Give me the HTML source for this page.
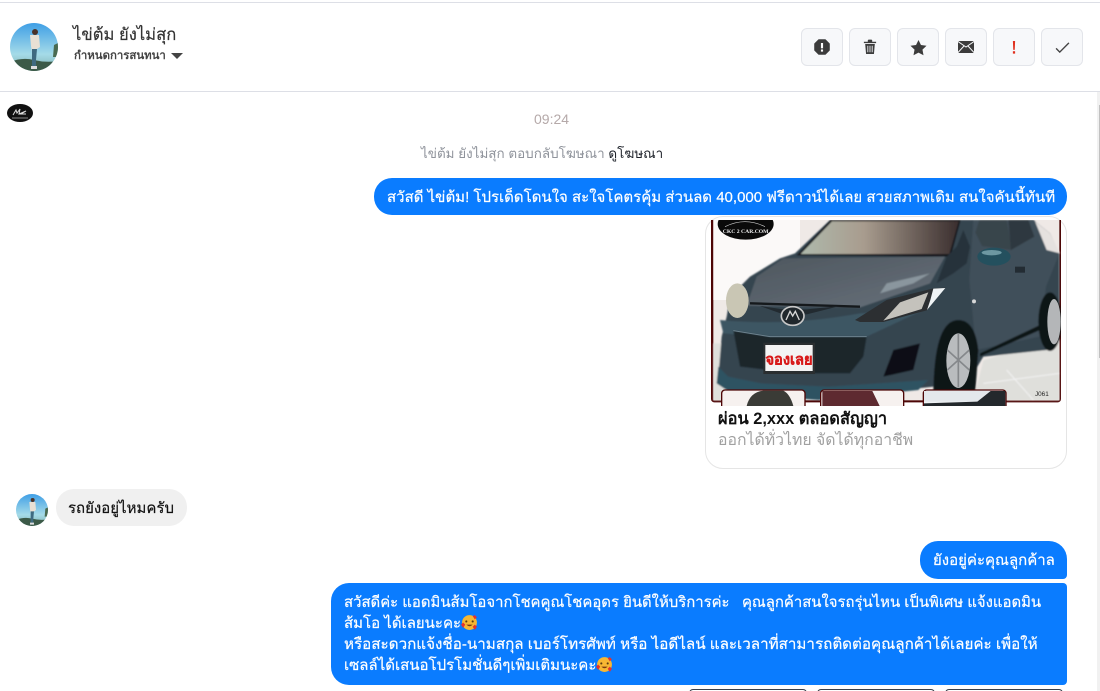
<!DOCTYPE html>
<html lang="th"><head><meta charset="utf-8"><title>Chat</title>
<style>
html,body{margin:0;padding:0;background:#fff;width:1100px;height:691px;overflow:hidden}
body{position:relative;font-family:"Liberation Sans","Noto Sans CJK SC",sans-serif;color:#111}
.a{position:absolute;white-space:nowrap}
.line{position:absolute;left:0;width:1100px;height:1px;background:#dddfe6}
.btn{position:absolute;top:28px;width:40px;height:36px;border:1px solid #e3e5ea;border-radius:6px;background:#f7f8fa;display:flex;align-items:center;justify-content:center}
.out{position:absolute;background:#0a7cff;color:#fff;font-size:15px;line-height:20px;white-space:nowrap;-webkit-text-stroke:.2px #fff}
.bb{position:absolute;top:689px;width:118px;height:8px;background:#fff;border:1px solid #3a3f4a;border-radius:6px;box-sizing:border-box}
</style></head><body>
<svg width="0" height="0" style="position:absolute"><defs>
<linearGradient id="sky" x1="0" y1="0" x2="0" y2="1"><stop offset="0" stop-color="#3f9fe6"/><stop offset=".65" stop-color="#a5dbe8"/><stop offset="1" stop-color="#7fb0b0"/></linearGradient>
<clipPath id="avc"><circle cx="24" cy="24" r="24"/></clipPath>
<symbol id="av" viewBox="0 0 48 48"><g clip-path="url(#avc)"><rect width="48" height="48" fill="url(#sky)"/><path d="M0 39q12-5 24-2t24 1v10H0z" fill="#3c5a48"/><path d="M44 22l4-2v14h-5z" fill="#4a6a50"/><circle cx="25" cy="9" r="3" fill="#4a3228"/><path d="M20 12h9l1 12-3 2-1 3h-4l-1-6z" fill="#e8e0d4"/><path d="M22 26h5l-1 11v7h-4z" fill="#3f6a80"/><path d="M21 43h6v3h-6z" fill="#ddd"/></g></symbol>
<symbol id="em" viewBox="0 0 16 16"><circle cx="8" cy="8" r="7" fill="#f7b733"/><circle cx="5" cy="7" r="1" fill="#5a3a10"/><circle cx="11" cy="7" r="1" fill="#5a3a10"/><path d="M5 10q3 3 6 0z" fill="#7a3a10"/><path d="M0 10l2-2 2 2-2 3zM11 12l2-2 2 2-2 3zM11 2l2-1 2 2-2 2z" fill="#e5322d"/></symbol>
<linearGradient id="hood" x1="0" y1="0" x2="1" y2="1"><stop offset="0" stop-color="#4d565e"/><stop offset="1" stop-color="#67707a"/></linearGradient>
<linearGradient id="ws" x1="0" y1="0" x2="1" y2="0"><stop offset="0" stop-color="#aeb9ac"/><stop offset=".4" stop-color="#a89c8e"/><stop offset="1" stop-color="#3a2e2e"/></linearGradient>
<filter id="bl"><feGaussianBlur stdDeviation="2.500"/></filter>
</defs></svg>

<div class="line" style="top:2px"></div>
<div class="line" style="top:91px"></div>

<svg class="a" style="left:10px;top:23px" width="48" height="48"><use href="#av"/></svg>
<div class="a" style="left:73px;top:25px;font-size:16.600px;line-height:20px;color:#333;-webkit-text-stroke:.2px #333">ไข่ต้ม ยังไม่สุก</div>
<div class="a" style="left:74px;top:49px;font-size:11.400px;line-height:15px;font-weight:700;color:#444">กำหนดการสนทนา</div>
<svg class="a" style="left:171px;top:52px" width="12" height="8"><path d="M0 1h12L6 7z" fill="#444"/></svg>

<div class="btn" style="left:801px"><svg width="16" height="16" viewBox="0 0 18 18"><path d="M5.500 1h7L17 5.500v7L12.500 17h-7L1 12.500v-7z" fill="#3c3c3c" stroke="#3c3c3c" stroke-width="1.500" stroke-linejoin="round"/><rect x="7.800" y="4.500" width="2.400" height="6" fill="#fff"/><rect x="7.800" y="11.800" width="2.400" height="2.400" fill="#fff"/></svg></div>
<div class="btn" style="left:849px"><svg width="14" height="16" viewBox="0 0 16 18"><path d="M1 3h14v1.500H1zM5.500 1.500q0-1 1-1h3q1 0 1 1V3h-5z" fill="#3c3c3c"/><path d="M2.500 5.500h11l-1 11.500h-9z" fill="#3c3c3c"/><path d="M5.500 7.500v7.500M8 7.500v7.500M10.500 7.500v7.500" stroke="#f7f8fa" stroke-width="1"/></svg></div>
<div class="btn" style="left:897px"><svg width="17" height="17" viewBox="0 0 18 17"><path d="M9 .5l2.600 5.400 5.900.8-4.300 4.100 1.100 5.900L9 13.900l-5.300 2.800 1.100-5.900L.5 6.700l5.900-.8z" fill="#3c3c3c"/></svg></div>
<div class="btn" style="left:945px"><svg width="16" height="12" viewBox="0 0 16 12"><rect width="16" height="12" rx="1" fill="#3c3c3c"/><path d="M0 .5l8 5.500 8-5.500M0 11.500l6-6.500M16 11.500l-6-6.500" stroke="#f7f8fa" stroke-width="1" fill="none"/></svg></div>
<div class="btn" style="left:993px"><svg width="4" height="13" viewBox="0 0 4 14"><path d="M.8 0h2.400l-.4 9.500H1.200z" fill="#e0301e"/><rect x=".8" y="11" width="2.400" height="2.600" fill="#e0301e"/></svg></div>
<div class="btn" style="left:1041px"><svg width="15" height="11" viewBox="0 0 16 12"><path d="M1 7l4 4L15 1" fill="none" stroke="#444" stroke-width="1.500"/></svg></div>

<div class="a" style="left:1097px;top:92px;width:3px;height:599px;background:#f1f1f1"></div>
<div class="a" style="left:1099px;top:105px;width:1px;height:253px;background:#c1c1c1"></div>

<svg class="a" style="left:7px;top:104px" width="26" height="18" viewBox="0 0 26 18"><ellipse cx="13" cy="9" rx="13" ry="9" fill="#111"/><path d="M6 11l3-5 1 3 3-4-1 5 7-3-5 3 5 0" fill="none" stroke="#ddd" stroke-width="1"/><path d="M5 14h16" stroke="#888" stroke-width="1"/></svg>

<div class="a" style="left:534px;top:111px;font-size:14px;line-height:17px;color:#b5a9a9">09:24</div>
<div class="a" style="left:421px;top:145px;font-size:13.450px;line-height:17px;color:#90949c">ไข่ต้ม ยังไม่สุก ตอบกลับโฆษณา <span style="color:#1d2129">ดูโฆษณา</span></div>

<div class="out" style="left:374px;top:178px;width:693px;height:37px;border-radius:18px;"><span class="a" style="left:13px;top:10px">สวัสดี ไข่ต้ม! โปรเด็ดโดนใจ สะใจโคตรคุ้ม ส่วนลด 40,000 ฟรีดาวน์ได้เลย สวยสภาพเดิม สนใจคันนี้ทันที</span></div>

<div class="a" style="left:705px;top:216px;width:362px;height:253px;box-sizing:border-box;border:1px solid #e5e5e5;border-radius:18px"></div>
<svg class="a" style="left:705px;top:220px" width="362" height="186" viewBox="15 30 1086 558">
<defs><clipPath id="fr"><rect x="33" y="0" width="1050" height="577" rx="10"/></clipPath><clipPath id="vb"><rect x="18" y="30" width="1080" height="558"/></clipPath></defs>
<g clip-path="url(#vb)">
<rect x="33" y="0" width="1050" height="577" rx="10" fill="#4d0606"/>
<g clip-path="url(#fr)">
<rect x="40" y="30" width="1038" height="541" fill="#efe9e6"/>
<rect x="40" y="30" width="260" height="240" fill="#fbf9f8"/>
<g filter="url(#bl)">
<path d="M40 400h60l60 171H40zM820 571l30-120 228-70v190z" fill="#dfdfdb"/>
<path d="M850 520l228-30M920 480l80 90" stroke="#f2f2f2" stroke-width="3"/>
<path d="M55 500l10-120 15-60 10-60 60-60 90-55 45-15L390 30h610l50 40 28 60v260l-38 30-190 20-30 50-120 40-280 30-270-20-90-20z" fill="#34454f"/>
<path d="M820 30h180l50 40 28 60-40 100-20 150-190 40-20-210z" fill="#414f5a"/>
<path d="M290 136L392 30h390l-30 110z" fill="#15171a"/>
<path d="M302 132L396 34h380l-28 98z" fill="url(#ws)"/>
<path d="M838 30h82l16 90-90-12-20-40z" fill="#39444c"/>
<path d="M925 30h60l18 50-70 40z" fill="#2d383f"/>
<path d="M1005 34l45 36 30 60-40-10z" fill="#e5e1df"/>
<path d="M145 272l25-72 80-55 485-5-45 80-210 72-335-5z" fill="url(#hood)"/>
<path d="M560 220l130-30-50 30-100 30z" fill="#8a969e"/>
<path d="M740 140l-30 80 50-30 40-30 10-50-20-50-20 50z" fill="#25313b"/>
<path d="M60 330q200 20 420-20l190-10-170 80-300 0-130-10z" fill="#3c5664"/>
<path d="M100 362l110 18 290 0-10 60-40 50-160 0-170-20z" fill="#1a252c"/>
<path d="M580 420l80-20-20 80-90 20z" fill="#0d1114"/>
<path d="M55 470l30 30 100 20 200 10 300-20-30 30-300 30-260-20-45-30z" fill="#2e5262"/>
<path d="M700 560q0-230 75-230 50 0 60 90l-10 140z" fill="#0e1316"/>
<path d="M840 430l190-90-10 20-180 80z" fill="#0f1417"/>
<ellipse cx="1050" cy="335" rx="35" ry="88" fill="#0f1417"/>
</g>
<path d="M150 280l330 10" stroke="#15191c" stroke-width="7"/>
<ellipse cx="882" cy="140" rx="50" ry="27" fill="#24505e"/>
<ellipse cx="875" cy="128" rx="30" ry="8" fill="#6d98a2"/>
<ellipse cx="112" cy="272" rx="34" ry="52" fill="#c9c6b4"/>
<path d="M465 330l95-60 140-35 36-2-56 68-130 35-70 0z" fill="#2c2f32"/>
<path d="M550 332l50-55 85-30-20 50z" fill="#c4c2bc"/>
<path d="M700 236l36-2-55 66 10-30z" fill="#f0f4f6"/>
<path d="M180 288l70 25h70l100-25-100 10h-70z" fill="#222a30"/>
<path d="M100 362l110 18 290 0" stroke="#6d828e" stroke-width="3" fill="none"/>
<ellipse cx="278" cy="318" rx="34" ry="28" fill="#20272c" stroke="#c8c8c8" stroke-width="5"/>
<path d="M258 330l12-26 8 14 8-14 12 26" fill="none" stroke="#d8d8d8" stroke-width="4"/>
<rect x="190" y="398" width="155" height="94" fill="#2a2e30"/>
<rect x="196" y="405" width="142" height="78" fill="#f3f3f3"/>
<text x="267" y="464" text-anchor="middle" font-size="44" font-weight="700" fill="#d81a1a" stroke="#d81a1a">จองเลย</text>
<ellipse cx="775" cy="452" rx="36" ry="82" fill="#b9bcbe"/>
<path d="M775 372v160M742 420l66 60M808 420l-66 60" stroke="#85888b" stroke-width="5"/>
<ellipse cx="1062" cy="335" rx="20" ry="68" fill="#b4b6b8"/>
<circle cx="822" cy="274" r="6" fill="#d8d8d8"/>
<path d="M945 170h30v18h-30z" fill="#232c33"/>
<ellipse cx="137" cy="42" rx="84" ry="47" fill="#0a0a0a"/>
<text x="137" y="69" text-anchor="middle" font-family="Liberation Serif,serif" font-size="17" font-weight="700" fill="#eee">CKC 2 CAR.COM</text>
<path d="M75 50q60-30 120 0" fill="none" stroke="#ccc" stroke-width="2"/>
<text x="1005" y="558" font-size="19" fill="#222">J061</text>
</g>
<g stroke="#4d0606" stroke-width="4">
<rect x="65" y="540" width="250" height="70" rx="10" fill="#f6f1ef"/>
<rect x="362" y="540" width="249" height="70" rx="10" fill="#f6f1ef"/>
<rect x="670" y="540" width="248" height="70" rx="10" fill="#f0f2f4"/>
</g>
<path d="M140 588q10-42 50-46h60q20 10 30 46z" fill="#3a3b36"/>
<path d="M367 543h150l22 45H367z" fill="#5e2a30"/>
<path d="M672 543h200l-40 32H672z" fill="#e4e8ec"/><path d="M672 580l160-5 40-32 44 0v46H672z" fill="#23282c"/>
</g>
<rect x="18" y="588" width="1080" height="1" fill="#e5e5e5"/>
</svg>
<div class="a" style="left:718px;top:410px;font-size:16.400px;line-height:18px;font-weight:700;color:#111">ผ่อน 2,xxx ตลอดสัญญา</div>
<div class="a" style="left:718px;top:432px;font-size:15.800px;line-height:18px;color:#a0a0a0">ออกได้ทั่วไทย จัดได้ทุกอาชีพ</div>

<svg class="a" style="left:16px;top:494px" width="32" height="32"><use href="#av"/></svg>
<div class="a" style="left:56px;top:489px;width:131px;height:37px;border-radius:18px;background:#f0f0f0"><span class="a" style="left:12px;top:10px;font-size:15px;line-height:20px;color:#111;-webkit-text-stroke:.2px #111">รถยังอยู่ไหมครับ</span></div>

<div class="out" style="left:920px;top:541px;width:147px;height:38px;border-radius:18px 18px 4px 18px"><span class="a" style="left:13px;top:10px">ยังอยู่ค่ะคุณลูกค้าล</span></div>
<div class="out" style="left:331px;top:583px;width:736px;height:102px;border-radius:18px 4px 4px 18px">
<span class="a" style="left:13px;top:10px;font-size:14.900px">สวัสดีค่ะ แอดมินส้มโอจากโชคคูณโชคอุดร ยินดีให้บริการค่ะ &nbsp; คุณลูกค้าสนใจรถรุ่นไหน เป็นพิเศษ แจ้งแอดมิน</span>
<span class="a" style="left:13px;top:31px">ส้มโอ ได้เลยนะคะ<svg width="17" height="17" style="vertical-align:-3px"><use href="#em"/></svg></span>
<span class="a" style="left:13px;top:52px;font-size:15.200px">หรือสะดวกแจ้งชื่อ-นามสกุล เบอร์โทรศัพท์ หรือ ไอดีไลน์ และเวลาที่สามารถติดต่อคุณลูกค้าได้เลยค่ะ เพื่อให้</span>
<span class="a" style="left:13px;top:73px">เซลล์ได้เสนอโปรโมชั่นดีๆเพิ่มเติมนะคะ<svg width="17" height="17" style="vertical-align:-3px"><use href="#em"/></svg></span>
</div>
<div class="bb" style="left:689px"></div>
<div class="bb" style="left:817px"></div>
<div class="bb" style="left:945px"></div>
</body></html>
